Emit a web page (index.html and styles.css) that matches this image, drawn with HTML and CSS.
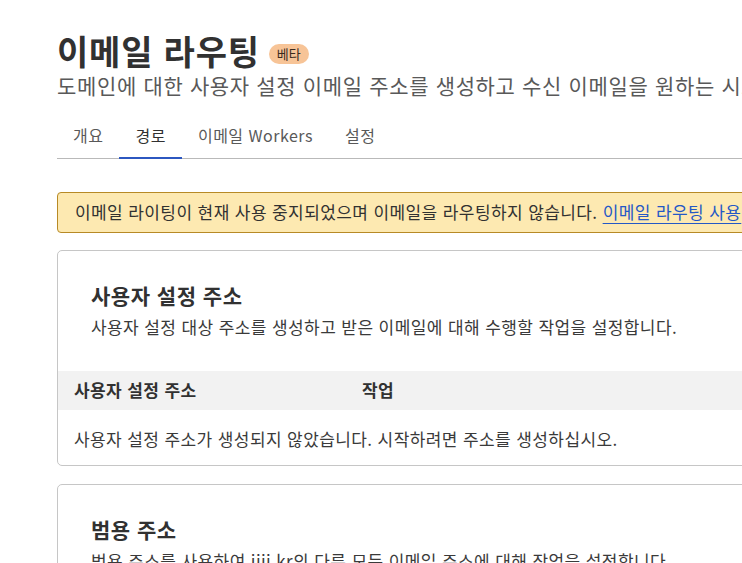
FILE: index.html
```html
<!DOCTYPE html>
<html lang="ko">
<head>
  <meta charset="UTF-8">
  <meta name="viewport" content="width=device-width, initial-scale=1.0">
  <title>이메일 라우팅</title>
  <link rel="stylesheet" href="styles.css">
</head>
<body>
  <div class="page">
    <div class="page-header">
      <h1>이메일 라우팅 <span class="badge">베타</span></h1>
      <p class="subtitle">도메인에 대한 사용자 설정 이메일 주소를 생성하고 수신 이메일을 원하는 시스템으로 보냅니다.</p>
    </div>

    <nav class="tabs">
      <a href="#" class="tab">개요</a>
      <a href="#" class="tab active">경로</a>
      <a href="#" class="tab">이메일 Workers</a>
      <a href="#" class="tab">설정</a>
    </nav>

    <div class="notice">
      이메일 라이팅이 현재 사용 중지되었으며 이메일을 라우팅하지 않습니다. <a href="#">이메일 라우팅 사용</a>
    </div>

    <div class="card">
      <div class="card-intro">
        <h2>사용자 설정 주소</h2>
        <p>사용자 설정 대상 주소를 생성하고 받은 이메일에 대해 수행할 작업을 설정합니다.</p>
      </div>
      <table>
        <thead>
          <tr>
            <th class="col-address">사용자 설정 주소</th>
            <th>작업</th>
          </tr>
        </thead>
        <tbody>
          <tr>
            <td colspan="2">사용자 설정 주소가 생성되지 않았습니다. 시작하려면 주소를 생성하십시오.</td>
          </tr>
        </tbody>
      </table>
    </div>

    <div class="card">
      <div class="card-intro">
        <h2>범용 주소</h2>
        <p>범용 주소를 사용하여 ijij.kr의 다른 모든 이메일 주소에 대해 작업을 설정합니다.</p>
      </div>
    </div>
  </div>
</body>
</html>
```

FILE: styles.css
```css
html, body {
  overflow: hidden;
}
body {
  margin: 0;
  font-family: "Noto Sans CJK KR", "Noto Sans", sans-serif;
  color: #313131;
  background: #fff;
}
.page {
  width: 960px;
  padding: 31px 0 0 57px;
}
h1 {
  margin: 0;
  font-size: 34px;
  line-height: 40px;
  letter-spacing: 0.8px;
  font-weight: 700;
  color: #313131;
  display: flex;
  align-items: center;
  gap: 9px;
  white-space: nowrap;
}
.badge {
  display: inline-block;
  width: 40px;
  height: 20px;
  line-height: 20px;
  margin-top: 6px;
  text-align: center;
  font-size: 13px;
  letter-spacing: 0;
  font-weight: 400;
  border-radius: 10px;
  background-color: #f7c497;
  color: #3a2a1e;
}
.subtitle {
  margin: 0;
  font-size: 21px;
  line-height: 28px;
  letter-spacing: 0.65px;
  color: #595959;
  white-space: nowrap;
}
.tabs {
  display: flex;
  margin-top: 15px;
  border-bottom: 1px solid #b9b9b9;
}
.tab {
  padding: 10px 16px 12px;
  font-size: 16px;
  line-height: 22px;
  letter-spacing: 0.5px;
  color: #595959;
  text-decoration: none;
  white-space: nowrap;
}
.tab.active {
  color: #313131;
  border-bottom: 2px solid #2c57c0;
  margin-bottom: -1px;
  padding-bottom: 11px;
}
.notice {
  margin-top: 33px;
  padding: 7px 17px 8px;
  font-size: 17px;
  line-height: 24px;
  letter-spacing: 0.4px;
  background-color: #fde9b1;
  border: 1px solid #b78a26;
  border-radius: 4px;
  white-space: nowrap;
}
.notice a {
  color: #2458c6;
  text-decoration: underline;
  text-underline-offset: 4px;
}
.card {
  margin-top: 17px;
  border: 1px solid #c6c6c6;
  border-radius: 5px;
  overflow: hidden;
}
.card + .card {
  margin-top: 18px;
}
.card-intro {
  padding: 30px 33px 32px;
}
.card-intro h2 {
  margin: 0;
  font-size: 21px;
  line-height: 28px;
  letter-spacing: 0.5px;
  font-weight: 700;
}
.card-intro p {
  margin: 6px 0 0;
  font-size: 17px;
  line-height: 24px;
  letter-spacing: 0.4px;
  color: #3a3a3a;
  white-space: nowrap;
}
table {
  width: 100%;
  border-collapse: collapse;
}
th, td {
  padding: 7px 16px 8px;
  text-align: left;
  font-size: 17px;
  line-height: 24px;
  letter-spacing: 0.4px;
  white-space: nowrap;
}
th {
  font-weight: 600;
  background-color: #f2f2f2;
}
th.col-address {
  width: 256px;
}
td {
  padding: 17px 16px 14px;
  color: #3a3a3a;
}
```
